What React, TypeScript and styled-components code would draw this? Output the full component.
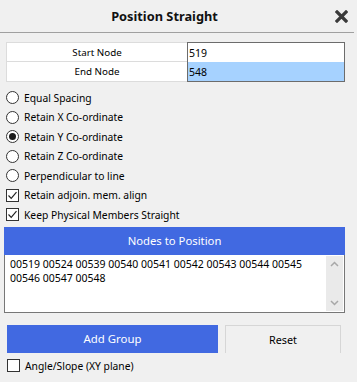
import React from "react";
import styled, { createGlobalStyle } from "styled-components";

const Global = createGlobalStyle`
  html, body { margin: 0; padding: 0; background: #f0f0f0; }
  body { font-family: "Noto Sans", "Liberation Sans", sans-serif; color: #000; }
  * { box-sizing: border-box; }
`;

const Panel = styled.div`
  width: 357px;
  height: 382px;
  background: #f0f0f0;
  overflow: hidden;
`;

const Header = styled.div`
  height: 33px;
  width: 354px;
  display: flex;
  align-items: center;
  border-bottom: 1px solid #a0a0a0;
`;

const Title = styled.div`
  flex: 1;
  text-align: center;
  font-size: 12.8px;
  font-weight: 700;
  padding-left: 3px;
  color: #111;
`;

const Close = styled.div`
  width: 28px;
  height: 32px;
  display: flex;
  align-items: center;
  justify-content: center;
  padding-left: 3px;
`;

const Body = styled.div`
  padding: 9px 12px 0 4px;
  display: flex;
  flex-direction: column;
`;

const Table = styled.div`
  margin-left: 2px;
  display: grid;
  grid-template-columns: 181px 158px;
  grid-template-rows: 20px 20px;
`;

const LabelCell = styled.div<{ $first?: boolean }>`
  background: #fff;
  border: 1px solid #dcdcdc;
  border-top: ${(p) => (p.$first ? "1px solid #dcdcdc" : "none")};
  border-right: none;
  font-size: 9.8px;
  display: flex;
  align-items: center;
  justify-content: center;
`;

const InputCell = styled.div<{ $first?: boolean; $bg: string }>`
  background: ${(p) => p.$bg};
  border-left: 1px solid #6c6c6c;
  border-right: 1px solid #6c6c6c;
  border-top: ${(p) => (p.$first ? "1px solid #6c6c6c" : "none")};
  border-bottom: ${(p) => (p.$first ? "none" : "1px solid #6c6c6c")};
  font-size: 10.5px;
  display: flex;
  align-items: center;
  padding-left: 1px;
`;

const Options = styled.div`
  margin-top: 6px;
  margin-left: 2px;
  display: flex;
  flex-direction: column;
`;

const OptionRow = styled.div`
  height: 19.5px;
  display: flex;
  align-items: center;
  gap: 5px;
  font-size: 10.3px;
`;

const Radio = styled.span<{ $on?: boolean }>`
  width: 13px;
  height: 13px;
  border-radius: 50%;
  border: 1px solid #333;
  background: #fff;
  display: flex;
  align-items: center;
  justify-content: center;
  &::after {
    content: "";
    width: 7px;
    height: 7px;
    border-radius: 50%;
    background: ${(p) => (p.$on ? "#1a1a1a" : "transparent")};
  }
`;

const Box = styled.span`
  width: 13px;
  height: 13px;
  border: 1px solid #333;
  background: #fff;
  display: flex;
  align-items: center;
  justify-content: center;
`;

const NodesHeader = styled.div`
  margin-top: 2px;
  height: 28px;
  width: 341px;
  background: #4169e1;
  color: #fff;
  font-size: 11.3px;
  display: flex;
  align-items: center;
  justify-content: center;
`;

const NodesBox = styled.div`
  width: 341px;
  height: 58px;
  background: #fff;
  border: 1px solid #777;
  border-top: none;
  display: flex;
`;

const NodesText = styled.div`
  flex: 1;
  padding: 2px 0 0 5px;
  font-size: 10.5px;
  line-height: 14px;
`;

const Scroll = styled.div`
  width: 17px;
  margin: 1px 1px 1px 0;
  background: #eaeaea;
  display: flex;
  flex-direction: column;
  justify-content: space-between;
  align-items: center;
  padding: 5px 0;
`;

const Buttons = styled.div`
  margin-top: 12px;
  margin-left: 3px;
  display: flex;
  gap: 7px;
  height: 28px;
`;

const AddButton = styled.div`
  width: 211px;
  background: #4169e1;
  color: #fff;
  font-size: 11.4px;
  display: flex;
  align-items: center;
  justify-content: center;
`;

const ResetButton = styled.div`
  width: 116px;
  border: 1px solid #d6d6d6;
  border-bottom: none;
  font-size: 10.8px;
  display: flex;
  align-items: center;
  justify-content: center;
  padding-top: 1px;
`;

const AngleRow = styled(OptionRow)`
  margin-top: 3px;
  margin-left: 3px;
  height: 20px;
`;

const Check = () => (
  <svg width="11" height="11" viewBox="0 0 11 11">
    <path d="M1.5 5.5 L4.2 8.3 L9.5 2.2" fill="none" stroke="#222" strokeWidth="1.2" />
  </svg>
);

const Chevron = ({ up }: { up?: boolean }) => (
  <svg width="9" height="6" viewBox="0 0 9 6">
    <path
      d={up ? "M1 5 L4.5 1.5 L8 5" : "M1 1 L4.5 4.5 L8 1"}
      fill="none"
      stroke="#a8a8a8"
      strokeWidth="1.5"
    />
  </svg>
);

const radios = [
  { label: "Equal Spacing", on: false },
  { label: "Retain X Co-ordinate", on: false },
  { label: "Retain Y Co-ordinate", on: true },
  { label: "Retain Z Co-ordinate", on: false },
  { label: "Perpendicular to line", on: false },
];

export default function App() {
  return (
    <Panel>
      <Global />
      <Header>
        <Title>Position Straight</Title>
        <Close>
          <svg width="13" height="13" viewBox="0 0 13 13">
            <path d="M2 2 L11 11 M11 2 L2 11" stroke="#3a3a3a" strokeWidth="3.2" strokeLinecap="square" />
          </svg>
        </Close>
      </Header>
      <Body>
        <Table>
          <LabelCell $first>Start Node</LabelCell>
          <InputCell $first $bg="#ffffff">519</InputCell>
          <LabelCell>End Node</LabelCell>
          <InputCell $bg="#a6d2ff">548</InputCell>
        </Table>
        <Options>
          {radios.map((r) => (
            <OptionRow key={r.label}>
              <Radio $on={r.on} />
              {r.label}
            </OptionRow>
          ))}
          <OptionRow>
            <Box>
              <Check />
            </Box>
            Retain adjoin. mem. align
          </OptionRow>
          <OptionRow>
            <Box>
              <Check />
            </Box>
            Keep Physical Members Straight
          </OptionRow>
        </Options>
        <NodesHeader>Nodes to Position</NodesHeader>
        <NodesBox>
          <NodesText>
            00519 00524 00539 00540 00541 00542 00543 00544 00545
            <br />
            00546 00547 00548
          </NodesText>
          <Scroll>
            <Chevron up />
            <Chevron />
          </Scroll>
        </NodesBox>
        <Buttons>
          <AddButton>Add Group</AddButton>
          <ResetButton>Reset</ResetButton>
        </Buttons>
        <AngleRow>
          <Box />
          Angle/Slope (XY plane)
        </AngleRow>
      </Body>
    </Panel>
  );
}
